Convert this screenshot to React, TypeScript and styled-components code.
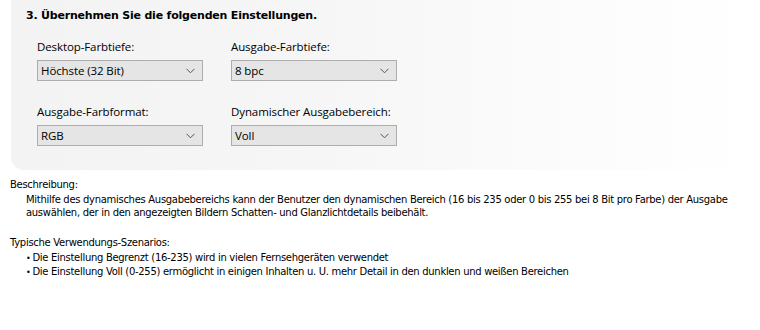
import React from "react";
import styled, { createGlobalStyle } from "styled-components";

const Global = createGlobalStyle`
  html, body { margin: 0; padding: 0; background: #ffffff; }
  body { font-family: "Liberation Sans", Arial, sans-serif; color: #000; }
`;

const Page = styled.div`
  width: 760px;
  height: 330px;
  overflow: hidden;
  background: #fff;
`;

const Panel = styled.section`
  margin-left: 11px;
  height: 170px;
  box-sizing: border-box;
  padding: 9px 0 0 15px;
  border-bottom-left-radius: 13px;
  background: linear-gradient(to right, #f3f3f3 0%, #f6f6f6 40%, #fbfbfb 70%, #ffffff 100%);
`;

const Title = styled.h3`
  margin: 0;
  font-family: "DejaVu Sans", Tahoma, sans-serif;
  font-weight: bold;
  font-size: 11px;
  line-height: 13px;
  letter-spacing: -0.2px;
`;

const Grid = styled.div`
  display: grid;
  grid-template-columns: 166px 166px;
  column-gap: 28px;
  row-gap: 24px;
  margin: 18px 0 0 11px;
`;

const Field = styled.div`
  display: flex;
  flex-direction: column;
  gap: 6px;
`;

const Label = styled.label`
  font-family: "Open Sans", "Segoe UI", sans-serif;
  font-size: 11.5px;
  line-height: 14px;
  letter-spacing: -0.1px;
  color: #000;
`;

const Select = styled.div`
  height: 21px;
  box-sizing: border-box;
  border: 1px solid #adadad;
  background: #e5e5e5;
  display: flex;
  align-items: center;
  justify-content: space-between;
  padding: 0 7px 0 3px;
  font-family: "Open Sans", "Segoe UI", sans-serif;
  font-size: 11.5px;
  letter-spacing: -0.1px;
`;

const Chevron = () => (
  <svg width="9" height="6" viewBox="0 0 9 6">
    <path d="M0.5 0.8 L4.5 4.8 L8.5 0.8" fill="none" stroke="#555" strokeWidth="1" />
  </svg>
);

const Info = styled.div`
  font-family: "DejaVu Sans", Tahoma, sans-serif;
  font-size: 10px;
  line-height: 13px;
  letter-spacing: -0.3px;
  padding: 8px 0 0 10px;
`;

const Heading = styled.div``;

const Body = styled.div`
  padding-left: 16px;
  margin: 2px 0 17px;
`;

const List = styled.ul`
  margin: 0;
  padding: 2px 0 0 16px;
  list-style: none;
`;

const Item = styled.li`
  display: flex;
  align-items: baseline;
  gap: 2px;
  &::before {
    content: "•";
    font-size: 8px;
  }
`;

const fields = [
  { label: "Desktop-Farbtiefe:", value: "Höchste (32 Bit)" },
  { label: "Ausgabe-Farbtiefe:", value: "8 bpc" },
  { label: "Ausgabe-Farbformat:", value: "RGB" },
  { label: "Dynamischer Ausgabebereich:", value: "Voll" },
];

export default function App() {
  return (
    <Page>
      <Global />
      <Panel>
        <Title>3. Übernehmen Sie die folgenden Einstellungen.</Title>
        <Grid>
          {fields.map((f) => (
            <Field key={f.label}>
              <Label>{f.label}</Label>
              <Select>
                <span>{f.value}</span>
                <Chevron />
              </Select>
            </Field>
          ))}
        </Grid>
      </Panel>
      <Info>
        <Heading>Beschreibung:</Heading>
        <Body>
          Mithilfe des dynamisches Ausgabebereichs kann der Benutzer den dynamischen Bereich (16 bis 235 oder 0 bis 255 bei 8 Bit pro Farbe) der Ausgabe
          <br />
          auswählen, der in den angezeigten Bildern Schatten- und Glanzlichtdetails beibehält.
        </Body>
        <Heading>Typische Verwendungs-Szenarios:</Heading>
        <List>
          <Item>Die Einstellung Begrenzt (16-235) wird in vielen Fernsehgeräten verwendet</Item>
          <Item>Die Einstellung Voll (0-255) ermöglicht in einigen Inhalten u. U. mehr Detail in den dunklen und weißen Bereichen</Item>
        </List>
      </Info>
    </Page>
  );
}
